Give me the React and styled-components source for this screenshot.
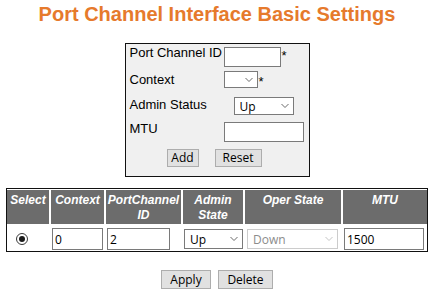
import React from "react";
import styled, { createGlobalStyle } from "styled-components";

const GlobalStyle = createGlobalStyle`
  body {
    margin: 0;
    background: #ffffff;
    font-family: "Liberation Sans", Arial, sans-serif;
    color: #000000;
  }
`;

const Page = styled.div`
  width: 434px;
  padding-top: 3px;
`;

const Title = styled.h1`
  margin: 0;
  font-size: 20px;
  line-height: 23px;
  font-weight: bold;
  color: #e67a2c;
  text-align: center;
`;

const FormBox = styled.div`
  box-sizing: border-box;
  width: 185px;
  margin: 17px auto 0;
  padding: 0 5px 9px 4px;
  border: 1px solid #111111;
  background: #f0f0f0;
`;

const FieldRow = styled.div`
  display: grid;
  grid-template-columns: 94px 80px;
  align-items: start;
  padding-top: ${({ $gap }) => $gap}px;
`;

const Label = styled.div`
  font-size: 13px;
  line-height: 15px;
  margin-top: ${({ $shift }) => $shift || 0}px;
  white-space: nowrap;
`;

const Control = styled.div`
  display: flex;
  align-items: flex-start;
  justify-content: ${({ $center }) => ($center ? "center" : "flex-start")};
`;

const Star = styled.span`
  font-size: 13px;
  line-height: 15px;
  margin-left: 1px;
  margin-top: ${({ $drop }) => $drop || 0}px;
`;

const TextInput = styled.input`
  box-sizing: border-box;
  width: ${({ $w }) => $w}px;
  height: ${({ $h }) => $h}px;
  margin: 0;
  padding: 0 2px;
  border: 1px solid #7a7a7a;
  border-radius: 0;
  background: #ffffff;
  font-family: "Open Sans", sans-serif;
  font-size: 12px;
  color: #000000;
  outline: none;
`;

const SelectShell = styled.span`
  position: relative;
  display: inline-block;
  width: ${({ $w }) => $w}px;
  height: ${({ $h }) => $h}px;
`;

const NativeSelect = styled.select`
  appearance: none;
  box-sizing: border-box;
  width: 100%;
  height: 100%;
  margin: 0;
  padding: 0 0 0 5px;
  border: 1px solid ${({ disabled }) => (disabled ? "#cccccc" : "#7a7a7a")};
  border-radius: 0;
  background: #ffffff;
  font-family: "Open Sans", sans-serif;
  font-size: 12px;
  color: ${({ disabled }) => (disabled ? "#8c8c8c" : "#000000")};
  opacity: 1;
  outline: none;
`;

const ChevronIcon = styled.svg`
  position: absolute;
  right: 5px;
  top: 50%;
  transform: translateY(-50%);
  pointer-events: none;
`;

const Chevron = ({ muted }) => (
  <ChevronIcon width="8" height="5" viewBox="0 0 8 5">
    <polyline
      points="0.5,0.5 4,4 7.5,0.5"
      fill="none"
      stroke={muted ? "#c4c4c4" : "#6a6a6a"}
      strokeWidth="1"
    />
  </ChevronIcon>
);

const Dropdown = ({ w, h, value, options, disabled }) => (
  <SelectShell $w={w} $h={h}>
    <NativeSelect defaultValue={value} disabled={disabled}>
      {options.map((o) => (
        <option key={o} value={o}>
          {o}
        </option>
      ))}
    </NativeSelect>
    <Chevron muted={disabled} />
  </SelectShell>
);

const ButtonRow = styled.div`
  display: flex;
  justify-content: center;
  gap: ${({ $gap }) => $gap}px;
  padding-top: ${({ $top }) => $top}px;
  padding-right: ${({ $right }) => $right || 0}px;
`;

const Button = styled.button`
  box-sizing: border-box;
  width: ${({ $w }) => $w}px;
  height: ${({ $h }) => $h}px;
  margin: 0;
  padding: 0;
  border: 1px solid #adadad;
  border-radius: 0;
  background: #e1e1e1;
  font-family: "Open Sans", sans-serif;
  font-size: 12px;
  line-height: 1;
  color: #000000;
`;

const Table = styled.div`
  display: grid;
  grid-template-columns: 42px 53px 75px 60px 96px 84px;
  column-gap: 2px;
  row-gap: 2px;
  width: fit-content;
  margin: 11px auto 0;
  padding: 1px 0 0;
  border: 1px solid #111111;
  background: #ffffff;
`;

const HeadCell = styled.div`
  box-sizing: border-box;
  height: 34px;
  padding-top: 3px;
  background: #6c6c6c;
  color: #ffffff;
  font-size: 12px;
  line-height: 15px;
  font-weight: bold;
  font-style: italic;
  text-align: center;
`;

const DataCell = styled.div`
  box-sizing: border-box;
  height: 25px;
  padding: 2px 0 1px ${({ $pad }) => $pad || 1}px;
  display: flex;
  align-items: center;
`;

const Radio = styled.input`
  appearance: none;
  box-sizing: border-box;
  width: 12px;
  height: 12px;
  margin: 0 0 0 ${({ $left }) => $left}px;
  border: 1px solid #3a3a3a;
  border-radius: 50%;
  background: #ffffff;
  display: grid;
  place-content: center;

  &::before {
    content: "";
    width: 6px;
    height: 6px;
    border-radius: 50%;
    background: #1a1a1a;
  }
`;

const headers = [
  ["Select"],
  ["Context"],
  ["PortChannel", "ID"],
  ["Admin", "State"],
  ["Oper State"],
  ["MTU"],
];

export default function App() {
  return (
    <Page>
      <GlobalStyle />
      <Title>Port Channel Interface Basic Settings</Title>

      <FormBox>
        <FieldRow $gap={3}>
          <Label $shift={-2}>Port Channel ID</Label>
          <Control>
            <TextInput $w={57} $h={20} />
            <Star $drop={1}>*</Star>
          </Control>
        </FieldRow>
        <FieldRow $gap={4}>
          <Label $shift={1}>Context</Label>
          <Control>
            <Dropdown w={34} h={17} value="" options={[""]} />
            <Star $drop={3}>*</Star>
          </Control>
        </FieldRow>
        <FieldRow $gap={8}>
          <Label $shift={0}>Admin Status</Label>
          <Control $center>
            <Dropdown w={60} h={18} value="Up" options={["Up", "Down"]} />
          </Control>
        </FieldRow>
        <FieldRow $gap={7}>
          <Label $shift={-1}>MTU</Label>
          <Control>
            <TextInput $w={80} $h={20} />
          </Control>
        </FieldRow>
        <ButtonRow $gap={16} $top={7} $right={5}>
          <Button $w={32} $h={18}>Add</Button>
          <Button $w={47} $h={18}>Reset</Button>
        </ButtonRow>
      </FormBox>

      <Table>
        {headers.map((lines) => (
          <HeadCell key={lines.join(" ")}>
            {lines.map((l) => (
              <div key={l}>{l}</div>
            ))}
          </HeadCell>
        ))}
        <DataCell>
          <Radio type="radio" name="pick" defaultChecked $left={8} />
        </DataCell>
        <DataCell>
          <TextInput $w={51} $h={22} defaultValue="0" />
        </DataCell>
        <DataCell>
          <TextInput $w={63} $h={22} defaultValue="2" />
        </DataCell>
        <DataCell>
          <Dropdown w={59} h={20} value="Up" options={["Up", "Down"]} />
        </DataCell>
        <DataCell $pad={2}>
          <Dropdown w={91} h={20} value="Down" options={["Up", "Down"]} disabled />
        </DataCell>
        <DataCell>
          <TextInput $w={80} $h={22} defaultValue="1500" />
        </DataCell>
      </Table>

      <ButtonRow $gap={7} $top={18}>
        <Button $w={50} $h={19}>Apply</Button>
        <Button $w={55} $h={19}>Delete</Button>
      </ButtonRow>
    </Page>
  );
}
